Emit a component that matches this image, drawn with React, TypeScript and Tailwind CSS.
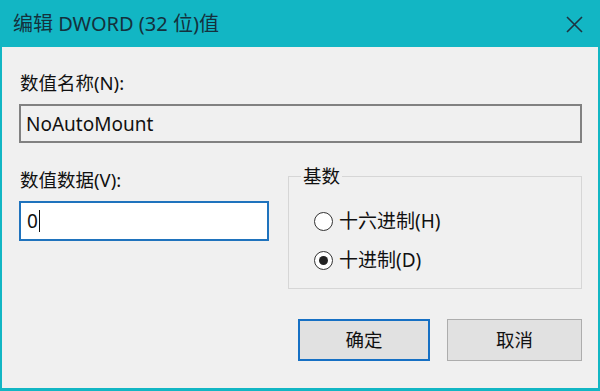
import React from "react";

const font = { fontFamily: '"Noto Sans", "Noto Sans CJK SC", sans-serif' };

function Radio({ checked, label }: { checked?: boolean; label: string }) {
  return (
    <div className="flex items-center gap-[6px] h-[24px]">
      <span className="flex items-center justify-center w-[19px] h-[19px] rounded-full border-[1.5px] border-[#333333] bg-white">
        {checked ? <span className="w-[9px] h-[9px] rounded-full bg-[#222222]" /> : null}
      </span>
      <span className="text-[19px] leading-[24px] text-[#111111]">{label}</span>
    </div>
  );
}

export default function App() {
  return (
    <div
      className="w-[600px] h-[391px] bg-[#12b6c4] flex flex-col overflow-hidden"
      style={font}
    >
      <div className="h-[47px] flex items-center justify-between pl-[13px] pr-[17px]">
        <span className="text-[20px] leading-[26px] text-[#14313d] mt-[1px]">编辑 DWORD (32 位)值</span>
        <svg width="17" height="17" viewBox="0 0 17 17" className="mt-[1px]">
          <path d="M1 1 L16 16 M16 1 L1 16" stroke="#1d3340" strokeWidth="1.6" fill="none" />
        </svg>
      </div>
      <div className="flex-1 bg-[#f0f0f0] mx-[2px] mb-[3px] pl-[17px] pr-[16px] flex flex-col">
        <div className="mt-[24px] text-[18.5px] leading-[24px] text-[#111111] pl-[1px]">数值名称(N):</div>
        <div className="mt-[9px] h-[39px] border-2 border-[#818181] bg-[#f0f0f0] flex items-center pl-[5px]">
          <span className="text-[19px] leading-[24px] text-[#111111]">NoAutoMount</span>
        </div>
        <div className="mt-[21px] flex gap-[19px]">
          <div className="w-[250px] flex flex-col">
            <div className="text-[18.5px] leading-[24px] text-[#111111] pl-[1px] mt-[4px]">数值数据(V):</div>
            <div className="mt-[9px] h-[40px] border-2 border-[#1f73bd] bg-white flex items-center pl-[6px]">
              <span className="text-[19px] leading-[24px] text-[#111111]">0</span>
              <span className="w-[1.5px] h-[22px] bg-[#111111] ml-[1px]" />
            </div>
          </div>
          <fieldset className="flex-1 border border-[#d6d6d6] px-[12px] pb-[16px] pt-[21px] min-w-0">
            <legend className="px-[2px] text-[18.5px] leading-[24px] text-[#111111]">基数</legend>
            <div className="pl-[13px] flex flex-col gap-[15px]">
              <Radio label="十六进制(H)" />
              <Radio checked label="十进制(D)" />
            </div>
          </fieldset>
        </div>
        <div className="mt-[30px] flex justify-end gap-[17px]">
          <div className="w-[132px] h-[42px] border-2 border-[#1670c4] bg-[#e1e1e1] flex items-center justify-center">
            <span className="text-[18.5px] leading-[24px] text-[#111111]">确定</span>
          </div>
          <div className="w-[135px] h-[42px] border border-[#adadad] bg-[#e1e1e1] flex items-center justify-center">
            <span className="text-[18.5px] leading-[24px] text-[#111111]">取消</span>
          </div>
        </div>
      </div>
    </div>
  );
}
